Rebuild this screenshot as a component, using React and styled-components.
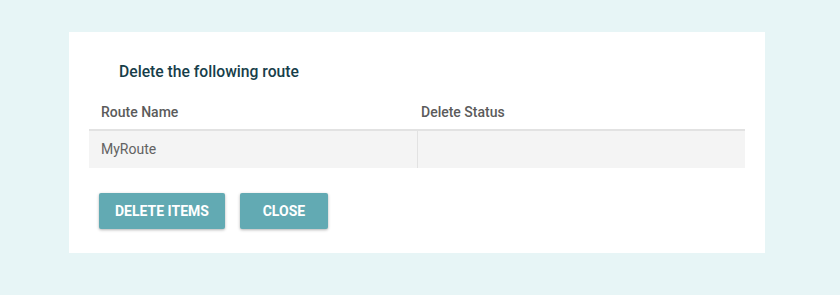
import styled, { createGlobalStyle } from "styled-components";

const GlobalStyle = createGlobalStyle`
  body {
    margin: 0;
    background: #e7f5f6;
    font-family: Roboto, "Liberation Sans", sans-serif;
  }
`;

const Page = styled.div`
  padding: 32px 75px 42px 69px;
`;

const Card = styled.section`
  background: #ffffff;
  padding: 24px 20px 24px 20px;
`;

const Title = styled.h3`
  margin: 0 0 0 30px;
  font-size: 15.7px;
  font-weight: 500;
  line-height: 31px;
  color: #173e4a;
`;

const Table = styled.div`
  display: grid;
  grid-template-columns: 1fr 1fr;
  margin-top: 8px;
  font-size: 14px;
`;

const HeadCell = styled.div`
  height: 34px;
  line-height: 34px;
  padding-left: ${(p) => (p.$first ? "12px" : "4px")};
  font-weight: 500;
  color: #5b5b5b;
  border-bottom: 2px solid #e2e2e2;
`;

const Cell = styled.div`
  height: 37px;
  line-height: 37px;
  padding-left: ${(p) => (p.$first ? "12px" : "4px")};
  background: #f4f4f4;
  color: #626262;
  border-left: ${(p) => (p.$first ? "none" : "1px solid #e2e2e2")};
`;

const Actions = styled.div`
  display: flex;
  gap: 15px;
  margin: 25px 0 0 10px;
`;

const Button = styled.button`
  height: 36px;
  padding: 0 16px;
  border: none;
  border-radius: 2px;
  background: #62aab3;
  color: #ffffff;
  font-family: Roboto, "Liberation Sans", sans-serif;
  font-size: 14px;
  font-weight: 700;
  text-transform: uppercase;
  box-shadow: 0 1px 3px rgba(0, 0, 0, 0.3);
  cursor: pointer;
  min-width: ${(p) => p.$minWidth || "auto"};
`;

export default function App() {
  return (
    <>
      <GlobalStyle />
      <Page>
        <Card>
          <Title>Delete the following route</Title>
          <Table>
            <HeadCell $first>Route Name</HeadCell>
            <HeadCell>Delete Status</HeadCell>
            <Cell $first>MyRoute</Cell>
            <Cell></Cell>
          </Table>
          <Actions>
            <Button>Delete Items</Button>
            <Button $minWidth="88px">Close</Button>
          </Actions>
        </Card>
      </Page>
    </>
  );
}
